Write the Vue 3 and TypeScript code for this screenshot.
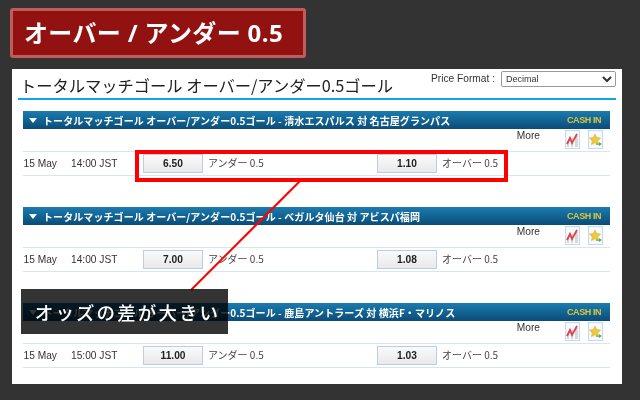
<script setup lang="ts">
interface Market {
  teams: string
  date: string
  time: string
  under: string
  over: string
}
const markets: Market[] = [
  { teams: '清水エスパルス 対 名古屋グランパス', date: '15 May', time: '14:00 JST', under: '6.50', over: '1.10' },
  { teams: 'ベガルタ仙台 対 アビスパ福岡', date: '15 May', time: '14:00 JST', under: '7.00', over: '1.08' },
  { teams: '鹿島アントラーズ 対 横浜F・マリノス', date: '15 May', time: '15:00 JST', under: '11.00', over: '1.03' },
]
</script>

<template>
  <div class="screen">
    <h1 class="title">オーバー / アンダー 0.5</h1>
    <main class="sheet">
      <div class="soft">
        <div class="head">
          <h2 class="head-title">トータルマッチゴール オーバー/アンダー0.5ゴール</h2>
          <div class="format">
            <span class="format-label">Price Format :</span>
            <select class="format-select"><option>Decimal</option></select>
          </div>
        </div>
        <section v-for="m in markets" :key="m.teams" class="market">
          <div class="band">
            <span class="caret"></span>
            <span class="band-title">トータルマッチゴール オーバー/アンダー0.5ゴール - {{ m.teams }}</span>
            <span class="cash">CASH IN</span>
          </div>
          <div class="tools">
            <span class="more">More</span>
            <span class="tool chart">
              <svg width="13" height="16" viewBox="0 0 13 16">
                <rect x="1" y="9" width="2" height="6" fill="#d9d9d9" />
                <rect x="5" y="6" width="2" height="9" fill="#d9d9d9" />
                <rect x="9" y="4" width="3" height="11" fill="#d9d9d9" />
                <path d="M1 12 L4 6 L6 11 L11 2" fill="none" stroke="#e0404a" stroke-width="1.8" />
              </svg>
            </span>
            <span class="tool star">
              <svg width="13" height="14" viewBox="0 0 13 14">
                <path d="M6 1 L7.7 4.6 L11.6 5.1 L8.8 7.8 L9.5 11.6 L6 9.8 L2.5 11.6 L3.2 7.8 L.4 5.1 L4.3 4.6 Z" fill="#f0c83c" stroke="#d2a52a" stroke-width=".5" />
                <path d="M7 10.5 H10 V9 L13 11 L10 13 V11.8 H7 Z" fill="#58b848" />
              </svg>
            </span>
          </div>
          <div class="odds">
            <span class="date">{{ m.date }}</span>
            <span class="time">{{ m.time }}</span>
            <span class="price first">{{ m.under }}</span>
            <span class="label label-under">アンダー 0.5</span>
            <span class="price second">{{ m.over }}</span>
            <span class="label">オーバー 0.5</span>
          </div>
        </section>
      </div>
    </main>

    <div class="mark"></div>
    <svg class="pointer" width="640" height="400" viewBox="0 0 640 400">
      <line x1="300" y1="181" x2="191" y2="290" stroke="#f00" stroke-width="2" />
    </svg>
    <div class="note">
      <span class="note-shade"></span>
      <span class="note-text">オッズの差が大きい</span>
    </div>
  </div>
</template>

<style>
html, body { background: #333; }
</style>

<style scoped>
.screen {
  position: relative;
  width: 640px;
  height: 400px;
  overflow: hidden;
  background: #333;
  padding: 8px 0 0 10px;
  box-sizing: border-box;
  font-family: "Liberation Sans", "Noto Sans CJK JP", sans-serif;
}
.title {
  box-sizing: border-box;
  width: 296px;
  height: 50px;
  margin: 0;
  padding: 0 0 4px 11px;
  display: flex;
  align-items: center;
  background: #921111;
  border: 3px solid #c25b5b;
  border-radius: 3px;
  color: #fff;
  font: 700 24px "Open Sans", "Noto Sans CJK JP", sans-serif;
  letter-spacing: 0.35px;
  white-space: nowrap;
}
.sheet {
  box-sizing: border-box;
  width: 610px;
  height: 315px;
  margin: 11px 0 0 2px;
  background: #fff;
  padding: 0 6px 0 6px;
}
.soft { filter: blur(0.35px); }
.head {
  display: flex;
  justify-content: space-between;
  height: 31px;
  box-sizing: border-box;
  border-bottom: 2px solid #0fa5e8;
}
.head-title {
  margin: 0;
  padding: 4px 0 0 2px;
  font: 400 16.25px/24px "Noto Sans CJK JP", sans-serif;
  color: #222;
  white-space: nowrap;
}
.format {
  display: flex;
  align-items: flex-start;
  gap: 6px;
  padding-top: 2px;
}
.format-label { font-size: 10.2px; line-height: 15px; color: #333; }
.format-select {
  box-sizing: border-box;
  width: 115px;
  height: 16px;
  padding: 0;
  font: 9px "Liberation Sans", sans-serif;
  color: #333;
  background: #fff;
  border: 1px solid #999;
  border-radius: 2px;
}
.market {
  margin: 0 6px 0 5px;
  height: 96px;
}
.market:first-of-type { margin-top: 11px; }
.band {
  height: 18px;
  display: flex;
  align-items: center;
  background: linear-gradient(#1a7cae, #0b4c78);
  color: #fff;
}
.caret {
  width: 0;
  height: 0;
  margin: 0 6px 0 6px;
  border-left: 4px solid transparent;
  border-right: 4px solid transparent;
  border-top: 5px solid #fff;
}
.band-title {
  flex: 1;
  font: 700 10px "Noto Sans CJK JP", sans-serif;
  white-space: nowrap;
  letter-spacing: 0.08px;
}
.cash {
  width: 43px;
  font: 700 9px "Liberation Sans", sans-serif;
  color: #d9c63c;
  letter-spacing: -0.4px;
}
.tools {
  height: 22px;
  display: flex;
  justify-content: flex-end;
  border-bottom: 1px solid #d4e5f4;
  padding-right: 7px;
}
.more {
  font-size: 10.2px;
  line-height: 14px;
  color: #333;
  margin: 0 17px 0 0;
}
.tool {
  box-sizing: border-box;
  width: 15px;
  height: 19px;
  margin-top: 1px;
  margin-left: 8px;
  display: flex;
  align-items: center;
  justify-content: center;
  border: 1px solid #c6d8ee;
  background: #f7f9fc;
}
.odds {
  height: 23px;
  display: flex;
  align-items: center;
  border-bottom: 1px solid #d4e5f4;
  font-size: 10.2px;
  color: #333;
}
.date { width: 48px; padding-left: 0.5px; box-sizing: border-box; }
.time { width: 72px; }
.price {
  box-sizing: border-box;
  width: 60px;
  height: 19px;
  text-align: center;
  line-height: 17px;
  font-weight: 700;
  color: #222;
  background: linear-gradient(#fafafa, #e9e9e9);
  border: 1px solid #b9cde8;
}
.label {
  margin-left: 5px;
  padding-bottom: 2px;
  font-family: "Noto Sans CJK JP", "Liberation Sans", sans-serif;
  font-size: 10px;
  color: #444;
  white-space: nowrap;
}
.label-under { width: 169px; }
.mark {
  position: absolute;
  left: 135px;
  top: 150px;
  width: 373px;
  height: 32px;
  box-sizing: border-box;
  border: 4px solid #f00;
}
.pointer { position: absolute; left: 0; top: 0; pointer-events: none; }
.note {
  position: absolute;
  left: 21px;
  top: 289px;
  width: 207px;
  height: 45px;
  display: flex;
  align-items: center;
  justify-content: center;
  padding-left: 6px;
  box-sizing: border-box;
}
.note-shade {
  position: absolute;
  inset: 0;
  background: #333;
  mix-blend-mode: multiply;
}
.note-text {
  position: relative;
  color: #fff;
  font: 500 18.5px "Noto Sans CJK JP", sans-serif;
  letter-spacing: 2.1px;
  white-space: nowrap;
}
</style>
